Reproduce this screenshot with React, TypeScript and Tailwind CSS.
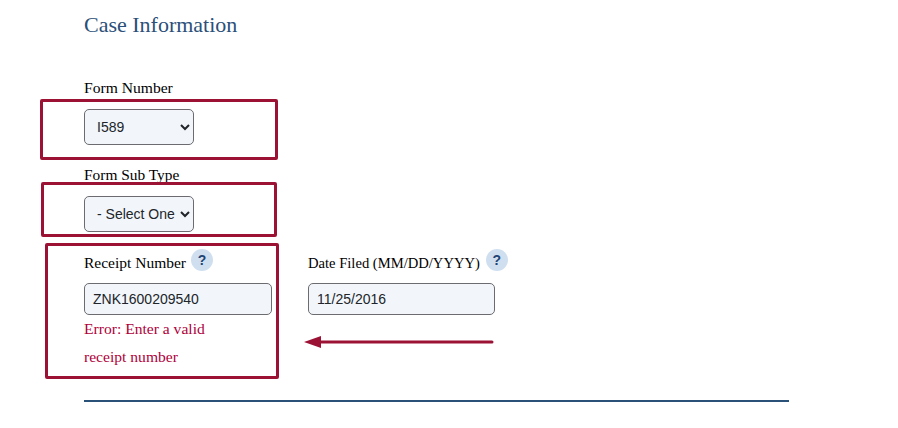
const serif = "font-['Liberation_Serif',Georgia,serif]";

function HelpBadge() {
  return (
    <span className="flex h-[22px] w-[22px] items-center justify-center rounded-full bg-[#cfdff0] font-['Liberation_Sans',sans-serif] text-[14px] font-bold text-[#1f4474]">
      ?
    </span>
  );
}

function Callout({ className }: { className: string }) {
  return <div className={`absolute rounded-[2px] border-[3px] border-[#9c1235] ${className}`} />;
}

const fieldClass =
  "block rounded-[5px] border border-[#6b6b70] bg-[#f2f6fb] font-['Liberation_Sans',sans-serif] text-[14px] text-[#212529]";

export default function App() {
  return (
    <div className="relative h-[428px] w-[898px] overflow-hidden bg-white pl-[84px] text-black">
      <h2 className={`${serif} pt-[12px] text-[22px] leading-[26px] text-[#2b5079]`}>Case Information</h2>

      <label className={`${serif} mt-[41px] block text-[15.6px] leading-[18px]`}>Form Number</label>
      <select defaultValue="I589" className={`${fieldClass} mt-[12px] h-[36px] w-[110px] pl-[8px]`}>
        <option>I589</option>
      </select>

      <label className={`${serif} mt-[21px] block text-[15.4px] leading-[18px]`}>Form Sub Type</label>
      <select defaultValue="- Select One" className={`${fieldClass} mt-[12px] h-[36px] w-[110px] pl-[8px]`}>
        <option>- Select One</option>
      </select>

      <div className="mt-[17px] flex gap-[36px]">
        <div className="w-[188px]">
          <div className="flex h-[22px] items-center">
            <label className={`${serif} pt-[6px] text-[15.5px] leading-[18px] whitespace-nowrap`}>Receipt Number</label>
            <span className="ml-[5px]">
              <HelpBadge />
            </span>
          </div>
          <input
            readOnly
            value="ZNK1600209540"
            className={`${fieldClass} mt-[12px] h-[32px] w-[188px] px-[8px] outline-none`}
          />
          <p className={`${serif} text-[15.6px] leading-[28px] text-[#b0003a]`}>
            Error: Enter a valid
            <br />
            receipt number
          </p>
        </div>
        <div className="w-[210px]">
          <div className="flex h-[22px] items-center">
            <label className={`${serif} pt-[6px] text-[14.6px] leading-[18px] whitespace-nowrap`}>
              Date Filed (MM/DD/YYYY)
            </label>
            <span className="ml-[6px]">
              <HelpBadge />
            </span>
          </div>
          <input
            readOnly
            value="11/25/2016"
            className={`${fieldClass} mt-[12px] h-[32px] w-[187px] bg-[#e7effb] px-[8px] outline-none`}
          />
        </div>
      </div>

      <hr className="mt-[29px] w-[705px] border-0 border-t-2 border-[#2a5278]" />

      {/* Red annotations drawn over the form */}
      <Callout className="left-[40px] top-[99px] h-[61px] w-[238px]" />
      <Callout className="left-[41px] top-[182px] h-[55px] w-[236px]" />
      <Callout className="left-[45px] top-[243px] h-[136px] w-[234px]" />
      <svg className="absolute left-[300px] top-[332px]" width="196" height="20" viewBox="0 0 196 20">
        <path d="M20 10H192" stroke="#9c1235" strokeWidth="3" strokeLinecap="round" fill="none" />
        <path d="M4 10L21 4V16Z" fill="#9c1235" />
      </svg>
    </div>
  );
}
